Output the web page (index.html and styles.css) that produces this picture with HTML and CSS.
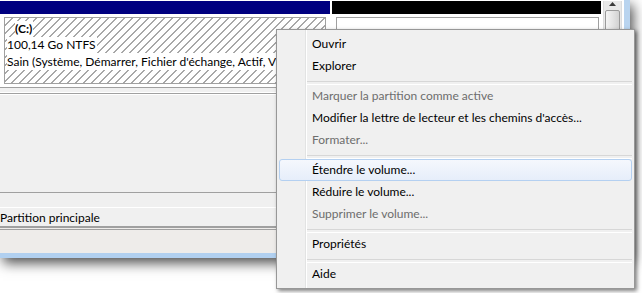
FILE: index.html
```html
<!DOCTYPE html>
<html lang="fr">
<head>
<meta charset="utf-8">
<title>Gestion des disques</title>
<link rel="stylesheet" href="styles.css">
</head>
<body>
<div class="desk">
  <div class="window">
    <div class="disk-row">
      <div class="vol vol-c">
        <div class="vol-bar bar-navy"></div>
        <div class="vol-body">
          <div class="vol-box hatched">
            <span class="vol-line vol-name">(C:)</span>
            <span class="vol-line">100,14 Go NTFS</span>
            <span class="vol-line vol-status">Sain (Système, Démarrer, Fichier d'échange, Actif, Vidage sur incident, Partition principale)</span>
          </div>
        </div>
      </div>
      <div class="vol vol-free">
        <div class="vol-bar bar-black"></div>
        <div class="vol-body">
          <div class="vol-box"></div>
        </div>
      </div>
      <div class="vscroll">
        <div class="vscroll-up"><svg width="7" height="4" viewBox="0 0 7 4"><path d="M0 4 L3.5 0 L7 4 Z" fill="#3b3b3b"/></svg></div>
        <div class="vscroll-thumb"></div>
      </div>
    </div>
    <div class="splitter"></div>
    <div class="list">
      <div class="list-empty"></div>
      <div class="list-head"></div>
      <div class="list-row">Partition principale</div>
      <div class="list-foot"></div>
    </div>
  </div>

  <ul class="menu">
    <li class="item">Ouvrir</li>
    <li class="item">Explorer</li>
    <li class="sep"></li>
    <li class="item disabled">Marquer la partition comme active</li>
    <li class="item">Modifier la lettre de lecteur et les chemins d'accès...</li>
    <li class="item disabled">Formater...</li>
    <li class="sep"></li>
    <li class="item hover">Étendre le volume...</li>
    <li class="item">Réduire le volume...</li>
    <li class="item disabled">Supprimer le volume...</li>
    <li class="sep"></li>
    <li class="item">Propriétés</li>
    <li class="sep"></li>
    <li class="item">Aide</li>
  </ul>
</div>
</body>
</html>
```

FILE: styles.css
```css
* { box-sizing: border-box; }

html, body {
  margin: 0;
  padding: 0;
  background: #fff;
}

.desk {
  position: relative;
  width: 642px;
  height: 293px;
  overflow: hidden;
  background: #fff;
  font-family: Lato, "Open Sans", sans-serif;
  font-size: 12px;
  color: #000;
}

/* background window */
.window {
  width: 630px;
  height: 258px;
  display: flex;
  flex-direction: column;
  background: #f0f0f0;
  border-right: 6px solid #b9d4ef;
  border-bottom: 5px solid #b1d0f0;
  box-shadow: 3px 5px 12px rgba(0, 0, 0, 0.7);
}

.disk-row {
  display: flex;
  height: 87px;
  padding-top: 1px;
  background: #fff;
}

.vol {
  display: flex;
  flex-direction: column;
}

.vol-c { width: 330px; }
.vol-free { width: 269px; margin-left: 2px; }

.vol-bar { height: 13px; flex: none; }
.bar-navy { background: #000080; }
.bar-black { background: #000; }

.vol-body {
  flex: 1;
  padding: 3px 4px 3px 4px;
  display: flex;
}

.vol-free .vol-body { padding: 3px 2px 3px 4px; }

.vol-box {
  flex: 1;
  border: 1px solid #a0a0a0;
  background: #fff;
  overflow: hidden;
  display: flex;
  flex-direction: column;
  align-items: flex-start;
  padding: 3px 0 0 2px;
}

.hatched {
  background: repeating-linear-gradient(135deg, #fff 0, #fff 4.6px, #a8a8a8 4.6px, #a8a8a8 5.66px);
}

.vol-line {
  background: #fff;
  white-space: nowrap;
  line-height: 16px;
  padding-right: 1px;
}

.vol-status {
  line-height: 17px;
  max-width: 269px;
  overflow: hidden;
  padding-right: 0;
}

.vol-name {
  font-weight: bold;
  margin-left: 8px;
}

.vscroll {
  width: 19px;
  margin-left: 2px;
  background: #e9e9e9;
  border-left: 1px solid #dcdcdc;
  border-right: 1px solid #dcdcdc;
  display: flex;
  flex-direction: column;
  align-items: center;
}

.vscroll-up {
  height: 8px;
  display: flex;
  align-items: flex-start;
  justify-content: center;
  padding-top: 1px;
}

.vscroll-thumb {
  margin-top: 1px;
  width: 15px;
  flex: 1;
  border: 1px solid #9a9a9a;
  border-radius: 2px;
  background: linear-gradient(to right, #f4f4f4, #e4e4e4 50%, #d2d2d2);
}

.splitter {
  height: 7px;
  border-top: 1px solid #a0a0a0;
  border-bottom: 1px solid #a0a0a0;
  background: #f0f0f0;
  box-shadow: inset 0 -1px 0 #fff;
}

.list {
  flex: 1;
  display: flex;
  flex-direction: column;
}

.list-empty {
  height: 98px;
  border-top: 1px solid #fff;
  background: #f0f0f0;
}

.list-head {
  height: 16px;
  border-top: 1px solid #a0a0a0;
  border-bottom: 1px solid #fff;
  background: #f0f0f0;
}

.list-row {
  height: 19px;
  line-height: 19px;
  border-bottom: 1px solid #a0a0a0;
  background: #f0f0f0;
  white-space: nowrap;
}

.list-foot {
  flex: 1;
  border-top: 3px double #a0a0a0;
  background: #eeecea;
}

/* context menu */
.menu {
  position: absolute;
  left: 276px;
  top: 29px;
  width: 359px;
  margin: 0;
  padding: 3px 2px;
  list-style: none;
  border: 1px solid #979797;
  background:
    linear-gradient(to right, transparent 28px, #e2e3e3 28px, #e2e3e3 29px, #fff 29px, #fff 30px, transparent 30px),
    #f0f0f0;
  box-shadow: 2px 2px 4px rgba(0, 0, 0, 0.5);
  color: #000;
}

.item {
  height: 22px;
  line-height: 20px;
  padding-left: 32px;
  white-space: nowrap;
  border: 1px solid transparent;
  border-radius: 3px;
}

.item.disabled { color: #6d6d6d; }

.item.hover {
  border-color: #b4d0f1;
  background: linear-gradient(#f5f8fd, #e6eefa);
}

.sep {
  height: 8px;
  margin-left: 28px;
  padding-top: 4px;
}

.sep::before {
  content: "";
  display: block;
  height: 2px;
  border-top: 1px solid #d7d7d7;
  border-bottom: 1px solid #fff;
}
```
